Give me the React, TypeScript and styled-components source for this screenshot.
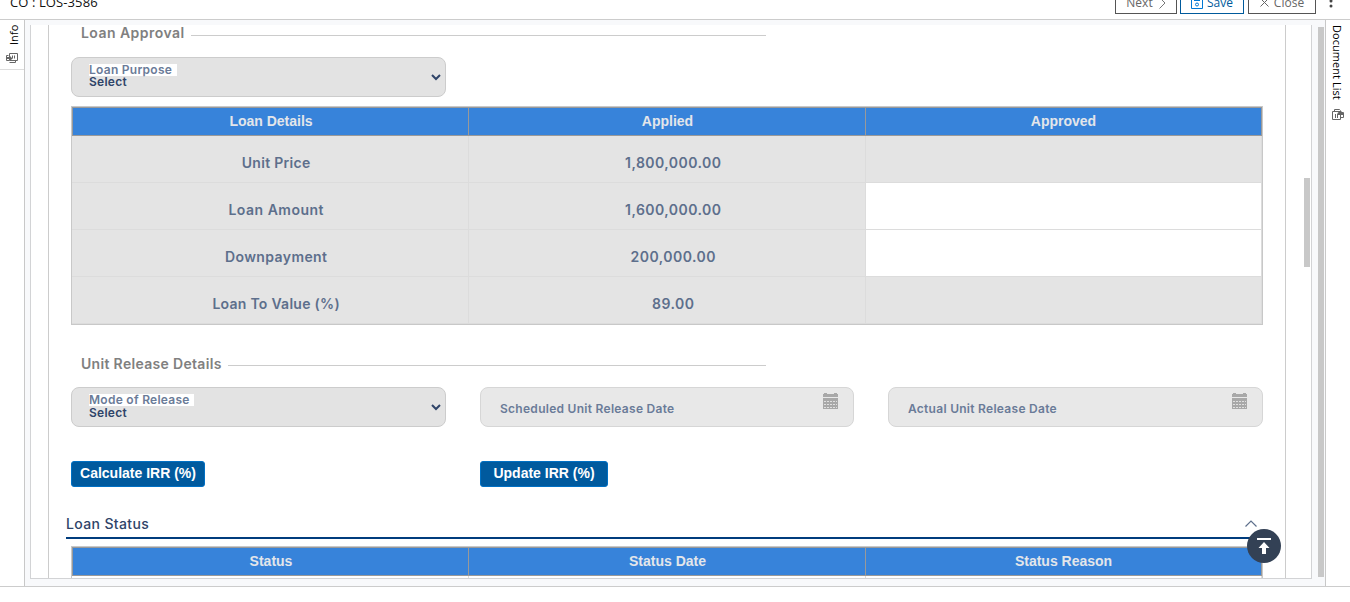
import React from "react";
import styled, { createGlobalStyle } from "styled-components";

const GlobalStyle = createGlobalStyle`
  *, *::before, *::after { box-sizing: border-box; }
  body { margin: 0; background: #fff; overflow: hidden; }
`;

const brand = `"Inter", "Liberation Sans", sans-serif`;
const ui = `"Open Sans", "Noto Sans", sans-serif`;

const Page = styled.div`
  width: 1350px;
  height: 602px;
  display: flex;
  flex-direction: column;
  overflow: hidden;
`;

const TopBar = styled.header`
  height: 20px;
  flex: none;
  display: flex;
  justify-content: space-between;
  align-items: flex-end;
  border-bottom: 1px solid #ccc;
  overflow: hidden;
  padding: 0 16px 5px 10px;
  font-family: ${ui};
`;

const CaseTitle = styled.div`
  font-size: 13px;
  line-height: 18px;
  color: #111;
  letter-spacing: 0.1px;
  margin-bottom: 3px;
`;

const Toolbar = styled.div`
  display: flex;
  align-items: flex-end;
`;

const ToolButton = styled.button<{ $w: number; $accent?: boolean; $gap: number; $ml?: number }>`
  width: ${(p) => p.$w}px;
  height: 24px;
  margin: 0 0 0 ${(p) => p.$ml ?? 0}px;
  padding: 1px 0 0;
  display: flex;
  align-items: center;
  justify-content: center;
  gap: ${(p) => p.$gap}px;
  background: #fff;
  border: 1px solid ${(p) => (p.$accent ? "#005a9c" : "#555")};
  color: ${(p) => (p.$accent ? "#005a9c" : "#666")};
  font: 12px/18px ${ui};
  svg { display: block; flex: none; }
`;

const Kebab = styled.div`
  width: 4px;
  height: 18px;
  margin: 0 1px 0 13px;
  svg { display: block; }
`;

const Main = styled.div`
  height: 567px;
  flex: none;
  display: flex;
  border-bottom: 1px solid #ccc;
`;

const LeftRail = styled.aside`
  width: 25px;
  flex: none;
  border-right: 1px solid #c8c8c8;
  font-family: ${ui};
`;

const RightRail = styled.aside`
  width: 25px;
  flex: none;
  border-left: 1px solid #c8c8c8;
  font-family: ${ui};
  display: flex;
  flex-direction: column;
  align-items: center;
  padding-top: 5px;
`;

const InfoTab = styled.div`
  height: 50px;
  border-bottom: 1px solid #ddd;
  display: flex;
  flex-direction: column;
  align-items: center;
  padding-top: 6px;
`;

const VerticalText = styled.span<{ $up?: boolean; $h: number }>`
  writing-mode: vertical-rl;
  transform: ${(p) => (p.$up ? "rotate(180deg)" : "none")};
  height: ${(p) => p.$h}px;
  width: 16px;
  line-height: 16px;
  margin: ${(p) => (p.$up ? "0 0 0 3px" : "0 2px 0 0")};
  font-size: 11px;
  letter-spacing: 0.05px;
  color: #000;
  white-space: nowrap;
`;

const RailIcon = styled.svg<{ $mt: number }>`
  display: block;
  flex: none;
  margin-top: ${(p) => p.$mt}px;
`;

const Workspace = styled.main`
  flex: 1;
  display: flex;
  background: #f8f9fb;
  padding: 5px 0 7px 5px;
`;

const Frame = styled.div`
  width: 1282px;
  height: 554px;
  flex: none;
  display: flex;
  position: relative;
  background: #fff;
  border: 1px solid #d2d3d5;
  border-top: 0;
  padding-left: 17px;
`;

const Sheet = styled.div`
  width: 1238px;
  flex: none;
  height: 553px;
  overflow: hidden;
  border: 1px solid #ccc;
  border-width: 0 1px;
  padding: 0 22px;
`;

const InnerThumb = styled.div`
  width: 6px;
  height: 89px;
  margin: 153px 0 0 18px;
  background: #c8c8c8;
`;

const OuterThumb = styled.div`
  width: 6px;
  height: 550px;
  margin: 2px 0 0 6px;
  background: #c8c8c8;
`;

const Legend = styled.div<{ $mt: number; $drop: number }>`
  width: 685px;
  height: 18px;
  margin: ${(p) => p.$mt}px 0 0 10px;
  display: flex;
  align-items: center;
  gap: 7px;
  font: 600 14px/18px ${brand};
  color: #808080;
  white-space: nowrap;
  &::after {
    content: "";
    flex: 1;
    height: 1px;
    margin-top: ${(p) => p.$drop}px;
    background: #ccc;
  }
`;

const Tracked = styled.span<{ $ls: number }>`
  letter-spacing: ${(p) => p.$ls}px;
  margin-right: ${(p) => -p.$ls}px;
`;

const FieldRow = styled.div<{ $mt: number }>`
  display: grid;
  grid-template-columns: 375px 374px 375px;
  column-gap: 34px;
  margin-top: ${(p) => p.$mt}px;
`;

const Field = styled.div<{ $date?: boolean }>`
  height: 40px;
  display: flex;
  justify-content: space-between;
  border: 1px solid ${(p) => (p.$date ? "#d6d6d6" : "#ccc")};
  border-radius: 8px;
  background: ${(p) => (p.$date ? "#e8e8e8" : "#e3e3e3")};
  padding: ${(p) => (p.$date ? "5px 15px 0 19px" : "6px 4px 0 17px")};
`;

const FieldLabel = styled.div<{ $w: number }>`
  width: ${(p) => p.$w}px;
  height: 12px;
  background: #fff;
  font: 600 12px/12px ${brand};
  color: #6a7b98;
  white-space: nowrap;
`;

const FieldValue = styled.div<{ $lh: number }>`
  font: 600 12px/${(p) => p.$lh}px ${brand};
  letter-spacing: 0.25px;
  color: #2f4469;
`;

const Placeholder = styled.div`
  padding-top: 8px;
  font: 600 12px/15px ${brand};
  letter-spacing: 0.28px;
  color: #6a7b98;
  white-space: nowrap;
`;

const SelectArrow = styled.svg`
  display: block;
  margin-top: 9px;
`;

const Table = styled.div<{ $mt: number }>`
  width: 1192px;
  margin-top: ${(p) => p.$mt}px;
  border: 1px solid #c8c8c8;
`;

const HeadRow = styled.div`
  height: 29px;
  display: grid;
  grid-template-columns: 396px 397px 395px;
  border: 1px solid #999;
  background: #3783da;
`;

const HeadCell = styled.div`
  text-align: center;
  font: bold 14px/27px "Liberation Sans", Arial, sans-serif;
  color: #e3e6ea;
  & + & { margin-left: -1px; border-left: 1px solid #999; }
`;

const BodyRow = styled.div`
  height: 47px;
  display: grid;
  grid-template-columns: 397px 397px 396px;
  border-bottom: 1px solid #dcdcdc;
`;

const Cell = styled.div<{ $open?: boolean }>`
  border-right: 1px solid #dcdcdc;
  background: ${(p) => (p.$open ? "#fff" : "#e4e4e4")};
  padding: 8px 0 0 12px;
  text-align: center;
  font: 600 14px/38px ${brand};
  color: #5d6f8c;
`;

const ButtonRow = styled.div`
  display: grid;
  grid-template-columns: 134px 128px;
  column-gap: 275px;
  margin-top: 34px;
`;

const ActionButton = styled.button`
  height: 26px;
  padding: 0 0 2px;
  border: 1px solid #0070c4;
  border-radius: 3px;
  background: #005a9e;
  color: #fff;
  font: bold 14px/22px "Liberation Sans", Arial, sans-serif;
  white-space: nowrap;
`;

const SectionHead = styled.div`
  height: 25px;
  width: 1197px;
  margin: 27px 0 0 -5px;
  border-bottom: 2px solid #003c7d;
  display: flex;
  justify-content: space-between;
  padding-right: 6px;
  font: 500 14px/20px ${brand};
  letter-spacing: 0.36px;
  color: #2f4469;
  svg { display: block; margin-top: 6px; }
`;

const ScrollTop = styled.button`
  position: absolute;
  right: 30px;
  bottom: 15px;
  width: 34px;
  height: 34px;
  padding: 0;
  border: 0;
  border-radius: 50%;
  background: #334155;
  svg { display: block; }
`;

const Calendar = () => (
  <svg width="15" height="17" viewBox="0 0 15 17" fill="#a8a8a8">
    <path d="M0 1h1V0h3v1h7V0h3v1h1v3H0zM0 5h15v11H0z" />
    <path
      d="M1 8.5h13M1 11.5h13M1 14.5h13"
      stroke="#e0e0e0"
      strokeWidth="1"
      strokeDasharray="2 1"
    />
  </svg>
);

const Arrow = () => (
  <SelectArrow width="10" height="8" viewBox="0 0 10 8" fill="none" stroke="#2f4469" strokeWidth="2">
    <path d="M1 2l4 4 4-4" />
  </SelectArrow>
);

const SelectField = ({ label, w, ls, lh }: { label: string; w: number; ls: number; lh: number }) => (
  <Field>
    <div>
      <FieldLabel $w={w}>
        <Tracked $ls={ls}>{label}</Tracked>
      </FieldLabel>
      <FieldValue $lh={lh}>Select</FieldValue>
    </div>
    <Arrow />
  </Field>
);

const DateField = ({ label }: { label: string }) => (
  <Field $date>
    <Placeholder>{label}</Placeholder>
    <Calendar />
  </Field>
);

const rows = [
  { name: "Unit Price", nameLs: 0.3, applied: "1,800,000.00", open: false },
  { name: "Loan Amount", nameLs: 0.5, applied: "1,600,000.00", open: true },
  { name: "Downpayment", nameLs: 0.4, applied: "200,000.00", open: true },
  { name: "Loan To Value (%)", nameLs: 0.27, applied: "89.00", open: false },
];

export default function App() {
  return (
    <Page>
      <GlobalStyle />
      <TopBar>
        <CaseTitle>CO : LOS-3586</CaseTitle>
        <Toolbar>
          <ToolButton $w={62} $gap={6}>
            Next
            <svg width="7" height="12" viewBox="0 0 7 12" fill="none" stroke="#777">
              <path d="M.5 .5l5.500 5.500-5.500 5.500" />
            </svg>
          </ToolButton>
          <ToolButton $w={64} $gap={4} $ml={3} $accent>
            <svg width="12" height="12" viewBox="0 0 12 12" fill="none" stroke="#0078d4">
              <path d="M.5 .5h11v11H.5zM3 3.500h6" />
              <circle cx="6" cy="7.500" r="1.500" />
            </svg>
            Save
          </ToolButton>
          <ToolButton $w={68} $gap={5} $ml={4}>
            <svg width="9" height="9" viewBox="0 0 9 9" fill="none" stroke="#666">
              <path d="M.5 .5l8 8M8.500 .5l-8 8" />
            </svg>
            Close
          </ToolButton>
          <Kebab>
            <svg width="4" height="12" viewBox="0 0 4 12" fill="#444">
              <circle cx="2" cy="5" r="1.500" />
              <circle cx="2" cy="10" r="1.500" />
            </svg>
          </Kebab>
        </Toolbar>
      </TopBar>
      <Main>
        <LeftRail>
          <InfoTab>
            <VerticalText $up $h={19}>Info</VerticalText>
            <RailIcon $mt={8} width="12" height="11" viewBox="0 0 12 11" fill="none" stroke="#666">
              <path d="M3.500 .5h8v7h-8zM6.500 2.500v3M8.500 2.500v3M2.500 2.500h-2v5h3M3.500 9.500h6v-2" />
              <path d="M1 4h3V3l2.500 2.500L4 8V6H1z" fill="#666" stroke="none" />
            </RailIcon>
          </InfoTab>
        </LeftRail>
        <Workspace>
          <Frame>
            <Sheet>
              <Legend $mt={-1} $drop={5}>
                <Tracked $ls={0.45}>Loan Approval</Tracked>
              </Legend>
              <FieldRow $mt={15}>
                <SelectField label="Loan Purpose" w={88} ls={0.27} lh={11} />
              </FieldRow>
              <Table $mt={9}>
                <HeadRow>
                  <HeadCell>Loan Details</HeadCell>
                  <HeadCell>Applied</HeadCell>
                  <HeadCell>Approved</HeadCell>
                </HeadRow>
                {rows.map((r) => (
                  <BodyRow key={r.name}>
                    <Cell>
                      <Tracked $ls={r.nameLs}>{r.name}</Tracked>
                    </Cell>
                    <Cell>
                      <Tracked $ls={0.45}>{r.applied}</Tracked>
                    </Cell>
                    <Cell $open={r.open} />
                  </BodyRow>
                ))}
              </Table>
              <Legend $mt={30} $drop={3}>
                <Tracked $ls={0.32}>Unit Release Details</Tracked>
              </Legend>
              <FieldRow $mt={14}>
                <SelectField label="Mode of Release" w={105} ls={0.27} lh={13} />
                <DateField label="Scheduled Unit Release Date" />
                <DateField label="Actual Unit Release Date" />
              </FieldRow>
              <ButtonRow>
                <ActionButton>Calculate IRR (%)</ActionButton>
                <ActionButton>Update IRR (%)</ActionButton>
              </ButtonRow>
              <SectionHead>
                Loan Status
                <svg width="12" height="8" viewBox="0 0 12 8" fill="none" stroke="#5d6f8c" strokeWidth="1.2">
                  <path d="M.5 6.500L6 1l5.500 5.500" />
                </svg>
              </SectionHead>
              <Table $mt={7}>
                <HeadRow>
                  <HeadCell>Status</HeadCell>
                  <HeadCell>Status Date</HeadCell>
                  <HeadCell>Status Reason</HeadCell>
                </HeadRow>
                <BodyRow>
                  <Cell $open />
                  <Cell $open />
                  <Cell $open />
                </BodyRow>
              </Table>
            </Sheet>
            <InnerThumb />
            <ScrollTop aria-label="Back to top">
              <svg width="34" height="34" viewBox="0 0 34 34" fill="#fff">
                <path d="M10 9h14v2H10zM17 13l5.500 6H19v6h-4v-6h-3.500z" />
              </svg>
            </ScrollTop>
          </Frame>
          <OuterThumb />
        </Workspace>
        <RightRail>
          <VerticalText $h={74}>Document List</VerticalText>
          <RailIcon $mt={10} width="12" height="11" viewBox="0 0 12 11" fill="none" stroke="#666">
            <path d="M.5 2.500h8v8h-8zM3.500 5v4M5.500 5v4M2.500 2V.5h5l1 1M9 8.500h2.500v-5H10" />
            <path d="M5.500 4l3-2.500L11 4v2H5.500z" fill="#666" stroke="none" />
          </RailIcon>
        </RightRail>
      </Main>
    </Page>
  );
}
